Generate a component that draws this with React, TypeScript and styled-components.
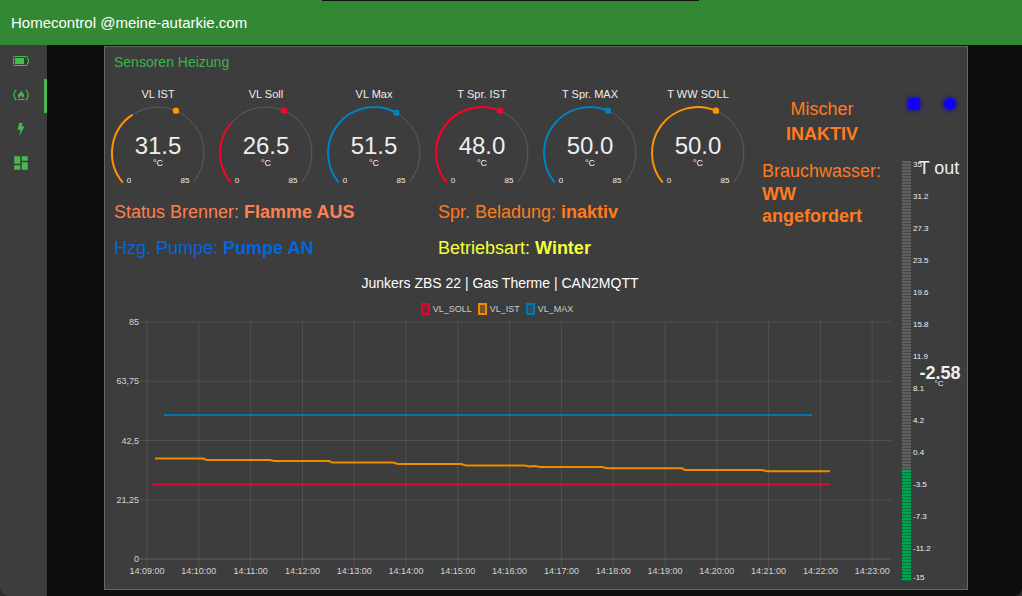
import React from 'react';
import styled, { createGlobalStyle } from 'styled-components';
import { MdDashboard } from 'react-icons/md';

const GlobalStyle = createGlobalStyle`
  *, *::before { box-sizing: border-box; }
  body {
    margin: 0;
    background: #2c2e2e;
    font-family: "Liberation Sans", Arial, sans-serif;
    color: #eee;
  }
`;

const Page = styled.div`
  display: flex;
  flex-direction: column;
  min-height: 100vh;
  overflow: hidden;
  border-radius: 0 0 8px 8px;
  background: #0d0d0d;
`;

const Header = styled.header`
  position: relative;
  height: 45px;
  padding: 0 11px;
  display: flex;
  align-items: center;
  background: #338833;
  &::before {
    content: '';
    position: absolute;
    top: 0;
    left: 322px;
    right: 323px;
    height: 1px;
    background: #111;
  }
`;

const HeaderTitle = styled.h1`
  margin: 0;
  font-size: 15px;
  font-weight: 400;
  color: #fff;
`;

const Body = styled.div`
  flex: 1;
  display: flex;
`;

const Sidebar = styled.nav`
  flex: 0 0 47px;
  background: #3d3d3d;
`;

const NavLink = styled.a<{ $active?: boolean }>`
  display: flex;
  align-items: center;
  justify-content: center;
  height: 34px;
  padding-bottom: 2px;
  padding-right: ${(p) => (p.$active ? 2 : 5)}px;
  border-right: ${(p) => (p.$active ? '3px solid #44bb4c' : 'none')};
  color: #44bb4c;
`;

const Main = styled.main`
  flex: 1;
  min-width: 0;
  padding: 1px 54px 6px 57px;
`;

const Card = styled.section`
  display: flex;
  background: #3d3d3d;
  box-shadow: inset 0 0 0 1px #666;
`;

const LeftArea = styled.div`
  flex: 1;
  min-width: 0;
`;

const CardTitle = styled.h2`
  margin: 0;
  padding-left: 10px;
  font-size: 14px;
  line-height: 32px;
  font-weight: 400;
  color: #37b64a;
`;

const TopRow = styled.div`
  display: grid;
  grid-template-columns: 9fr 2fr;
`;

const GaugeRow = styled.div`
  display: grid;
  grid-template-columns: repeat(6, 1fr);
  svg { display: block; width: 100%; }
`;

const StatusGrid = styled.div`
  display: grid;
  grid-template-columns: 1fr 1fr;
`;

const Status = styled.p<{ $color: string }>`
  margin: 0;
  padding-left: 10px;
  font-size: 18px;
  line-height: 36px;
  color: ${(p) => p.$color};
`;

const SidePanel = styled.div`
  padding: 19px 4px 0 0;
  font-size: 18px;
  color: #ff7b1c;
`;

const Mixer = styled.p`
  margin: 0;
  line-height: 25px;
  text-align: center;
  strong { display: block; }
`;

const HotWater = styled.p`
  margin: 12px 0 0;
  padding: 0 10px;
  line-height: 24px;
  strong { display: block; line-height: 22px; }
`;

const ChartTitle = styled.h3`
  margin: 0;
  font-size: 14px;
  line-height: 34px;
  font-weight: 400;
  text-align: center;
  color: #fff;
`;

const Legend = styled.ul`
  display: flex;
  justify-content: center;
  gap: 6px;
  margin: 0;
  padding: 0 6px 0 0;
  list-style: none;
  font-size: 9px;
  line-height: 18px;
  color: #ccc;
`;

const LegendItem = styled.li<{ $color: string }>`
  display: flex;
  align-items: center;
  gap: 3px;
  &::before {
    content: '';
    width: 9px;
    height: 12px;
    border: 2px solid ${(p) => p.$color};
    background: ${(p) => p.$color}55;
  }
`;

const ChartSvg = styled.svg`
  display: block;
  width: 100%;
`;

const RightArea = styled.div`
  flex: 0 0 72px;
  padding-top: 32px;
`;

const LedRow = styled.div`
  display: flex;
  align-items: center;
  justify-content: space-around;
  height: 52px;
  margin-bottom: 20px;
`;

const Led = styled.span<{ $round?: boolean }>`
  width: 12px;
  height: 12px;
  border-radius: ${(p) => (p.$round ? 6 : 3)}px;
  background: #1200ff;
  box-shadow: 0 0 4px 1px #1c1890;
`;

const ORANGE = '#ff9300';
const RED = '#ff0026';
const BLUE = '#0083bf';

const gauges = [
  { title: 'VL IST', value: 31.5, mark: 50, color: ORANGE },
  { title: 'VL Soll', value: 26.5, mark: 50, color: RED },
  { title: 'VL Max', value: 51.5, mark: 52, color: BLUE },
  { title: 'T Spr. IST', value: 48, mark: 50, color: RED },
  { title: 'T Spr. MAX', value: 50, mark: 50, color: BLUE },
  { title: 'T WW SOLL', value: 50, mark: 50, color: ORANGE },
];

const GAUGE_MAX = 85;

function gaugePoint(value: number): [number, number] {
  const angle = ((140 + (value / GAUGE_MAX) * 260) * Math.PI) / 180;
  return [54 + 46 * Math.cos(angle), 75 + 46 * Math.sin(angle)];
}

function gaugeArc(value: number) {
  const [x0, y0] = gaugePoint(0);
  const [x1, y1] = gaugePoint(value);
  const large = (value / GAUGE_MAX) * 260 > 180 ? 1 : 0;
  return `M${x0} ${y0}A46 46 0 ${large} 1 ${x1} ${y1}`;
}

function Gauge({ title, value, mark, color }: (typeof gauges)[number]) {
  const [mx, my] = gaugePoint(mark);
  return (
    <svg viewBox="0 0 108 116" textAnchor="middle" fill="#eee">
      <text x="54" y="20" fontSize="11">{title}</text>
      <path d={gaugeArc(GAUGE_MAX)} fill="none" stroke="#5c5c5c" />
      <path d={gaugeArc(value)} fill="none" stroke={color} strokeWidth="2" />
      <circle cx={mx} cy={my} r="3.2" fill={color} />
      <text x="54" y="76" fontSize="24">{value.toFixed(1)}</text>
      <text x="54" y="88" fontSize="9">°C</text>
      <text x="25" y="105" fontSize="8">0</text>
      <text x="81" y="105" fontSize="8">{GAUGE_MAX}</text>
    </svg>
  );
}

const yTicks = [85, 63.75, 42.5, 21.25, 0];
const xTicks = Array.from({ length: 15 }, (_, i) => `14:${String(9 + i).padStart(2, '0')}:00`);

const tickX = (i: number) => 43 + i * 51.8;
const tickY = (i: number) => 4 + i * 59.25;

function Chart() {
  return (
    <ChartSvg viewBox="0 0 792 272" fontSize="9" fill="#d4d4d4">
      <g stroke="#fff" strokeOpacity="0.1">
        {xTicks.map((t, i) => (
          <path key={t} d={`M${tickX(i)} 4V249`} />
        ))}
        {yTicks.map((t, i) => (
          <path key={t} d={`M35 ${tickY(i)}H787`} strokeOpacity={t === 0 ? 0.18 : 0.1} />
        ))}
      </g>
      {yTicks.map((t, i) => (
        <text key={t} x="35" y={tickY(i) + 3} textAnchor="end">
          {String(t).replace('.', ',')}
        </text>
      ))}
      {xTicks.map((t, i) => (
        <text key={t} x={tickX(i)} y="256" textAnchor="middle">{t}</text>
      ))}
      <g fill="none" strokeWidth="2">
        <path stroke="#0078ac" d="M60 97H708" />
        <path stroke="#dc0a30" d="M48 166.500H726" />
        <path
          stroke="#f08a00"
          d="M51 140.500H99L103 142H166L170 143H225L228 144.500H289L294 146H357L362 147.500H421L426 148.500L431 148L436 149H498L503 150.300H578L581 152H658L663 153.300H726"
        />
      </g>
    </ChartSvg>
  );
}

const SEGMENTS = 140;
const LIT_SEGMENTS = 37;
const levelLabels = ['35', '31.2', '27.3', '23.5', '19.6', '15.8', '11.9', '8.1', '4.2', '0.4', '-3.5', '-7.3', '-11.2', '-15'];

function LevelGauge() {
  return (
    <ChartSvg viewBox="0 0 72 440" fill="#eee">
      {Array.from({ length: SEGMENTS }, (_, i) => {
        const lit = i >= SEGMENTS - LIT_SEGMENTS;
        const y = 11 + i * 3;
        return (
          <g key={i}>
            <rect x="6" y={y} width="9" height="2" fill={lit ? '#00a651' : '#606060'} />
            <rect x="6" y={y + 2} width="9" height="1" fill={lit ? '#067040' : '#484848'} />
          </g>
        );
      })}
      {levelLabels.map((label, i) => (
        <text key={label} x="17" y={i === levelLabels.length - 1 ? 430 : 17 + i * 32} fontSize="8">
          {label}
        </text>
      ))}
      <text x="43" y="24" fontSize="18" textAnchor="middle">T out</text>
      <text x="44" y="229" fontSize="18" fontWeight="700" textAnchor="middle">-2.58</text>
      <text x="43" y="236" fontSize="8" textAnchor="middle">°C</text>
    </ChartSvg>
  );
}

const BatteryIcon = () => (
  <svg width="16" height="10" viewBox="0 0 16 10" fill="none" stroke="currentColor">
    <path d="M.5 1.500Q.5.5 1.500.5H13.500Q14.500.5 14.500 1.500V3H15.500V7H14.500V8.500Q14.500 9.500 13.500 9.500H1.500Q.5 9.500.5 8.500Z" />
    <path d="M2 2H11V8H2Z" fill="currentColor" stroke="none" />
  </svg>
);

const BurnerIcon = () => (
  <svg width="16" height="12" viewBox="0 0 16 12" fill="none" stroke="currentColor">
    <path d="M3 .8Q-1.200 6 3 11.200M13 .8Q17.200 6 13 11.200" strokeWidth="1.200" />
    <path d="M4.500 10.500H11.500" />
    <path
      d="M7.500.8C8 3 11 4 11 6.500C11 8 10.300 8.800 9.300 9.200C9.600 7.800 9 6.800 8 6C8 7.500 6.600 7.800 6.900 9.200C5.700 8.800 5 8 5 6.800C5 5.600 5.700 5 6 4C6.500 4.300 6.600 4.600 6.700 5C7.500 4 7.800 2.500 7.500.8Z"
      fill="currentColor"
      stroke="none"
    />
  </svg>
);

const BoltIcon = () => (
  <svg width="8" height="12" viewBox="0 0 8 12" fill="currentColor">
    <path d="M2.200 0H5.600L4.600 3.500L7.500 2.900L3.300 12H2.600L3.700 6.400L.5 7.100Z" />
  </svg>
);

export default function App() {
  return (
    <Page>
      <GlobalStyle />
      <Header>
        <HeaderTitle>Homecontrol @meine-autarkie.com</HeaderTitle>
      </Header>
      <Body>
        <Sidebar aria-label="Dashboard">
          <NavLink href="#batterie" aria-label="Batterie"><BatteryIcon /></NavLink>
          <NavLink href="#heizung" aria-label="Heizung" $active><BurnerIcon /></NavLink>
          <NavLink href="#strom" aria-label="Strom"><BoltIcon /></NavLink>
          <NavLink href="#home" aria-label="Home"><MdDashboard size={18} /></NavLink>
        </Sidebar>
        <Main>
          <Card>
            <LeftArea>
              <CardTitle>Sensoren Heizung</CardTitle>
              <TopRow>
                <div>
                  <GaugeRow>
                    {gauges.map((g) => (
                      <Gauge key={g.title} {...g} />
                    ))}
                  </GaugeRow>
                  <StatusGrid>
                    <Status $color="#ff7f50">Status Brenner: <strong>Flamme AUS</strong></Status>
                    <Status $color="#ff7b1c">Spr. Beladung: <strong>inaktiv</strong></Status>
                    <Status $color="#0066e0">Hzg. Pumpe: <strong>Pumpe AN</strong></Status>
                    <Status $color="#f5ff3c">Betriebsart: <strong>Winter</strong></Status>
                  </StatusGrid>
                </div>
                <SidePanel>
                  <Mixer>Mischer <strong>INAKTIV</strong></Mixer>
                  <HotWater>Brauchwasser: <strong>WW angefordert</strong></HotWater>
                </SidePanel>
              </TopRow>
              <ChartTitle>Junkers ZBS 22 | Gas Therme | CAN2MQTT</ChartTitle>
              <Legend>
                <LegendItem $color="#dc0a30">VL_SOLL</LegendItem>
                <LegendItem $color="#f08a00">VL_IST</LegendItem>
                <LegendItem $color="#0078ac">VL_MAX</LegendItem>
              </Legend>
              <Chart />
            </LeftArea>
            <RightArea>
              <LedRow>
                <Led />
                <Led $round />
              </LedRow>
              <LevelGauge />
            </RightArea>
          </Card>
        </Main>
      </Body>
    </Page>
  );
}
